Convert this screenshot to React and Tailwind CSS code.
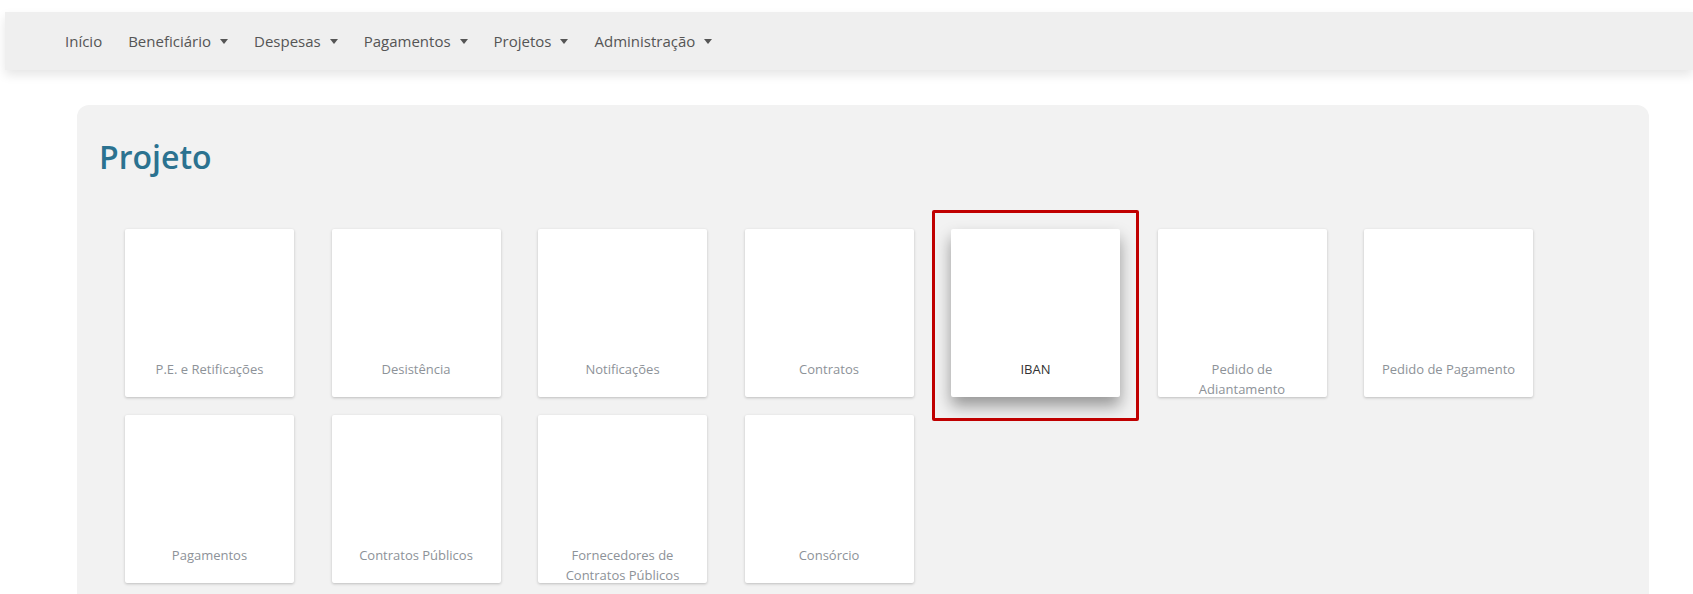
import { useState } from "react";

const menu = [
  { label: "Início" },
  { label: "Beneficiário", dropdown: true },
  { label: "Despesas", dropdown: true },
  { label: "Pagamentos", dropdown: true },
  { label: "Projetos", dropdown: true },
  { label: "Administração", dropdown: true },
];

const tiles = [
  { id: "pe", label: "P.E. e Retificações" },
  { id: "desistencia", label: "Desistência" },
  { id: "notificacoes", label: "Notificações" },
  { id: "contratos", label: "Contratos" },
  { id: "iban", label: "IBAN" },
  { id: "adiantamento", label: "Pedido de Adiantamento" },
  { id: "pedido-pagamento", label: "Pedido de Pagamento" },
  { id: "pagamentos", label: "Pagamentos" },
  { id: "contratos-publicos", label: "Contratos Públicos" },
  { id: "fornecedores", label: "Fornecedores de Contratos Públicos" },
  { id: "consorcio", label: "Consórcio" },
];

const Caret = () => (
  <svg width="8" height="5" viewBox="0 0 8 5" className="ml-[9px] mt-[1px]">
    <path d="M0 0h8L4 5z" fill="#555" />
  </svg>
);

const Tile = ({ tile, active }) => (
  <div className="relative">
    <button
      className={
        active
          ? "w-[169px] h-[168px] bg-white rounded-[2px] shadow-[0_9px_16px_rgba(0,0,0,0.38)] flex flex-col items-center pt-[130px] px-[14px]"
          : "w-[169px] h-[168px] bg-white rounded-[2px] shadow-[0_1px_3px_rgba(0,0,0,0.22)] flex flex-col items-center pt-[130px] px-[14px]"
      }
    >
      <span
        className={
          active
            ? "text-[13px] leading-[20px] text-[#333] text-center"
            : "text-[13px] leading-[20px] text-[#8d9298] text-center"
        }
      >
        {tile.label}
      </span>
    </button>
    {/* destaque do item selecionado */}
    {active && (
      <div className="absolute -left-[19px] -right-[19px] -top-[19px] -bottom-[24px] border-[3px] border-[#c00000] rounded-[2px] pointer-events-none" />
    )}
  </div>
);

export default function App() {
  const [selected, setSelected] = useState("iban");

  return (
    <div className="min-h-screen bg-white font-['Open_Sans',sans-serif]">
      {/* Navbar */}
      <nav className="mt-3 ml-[5px] h-[58px] bg-[#efefef] shadow-[0_5px_10px_rgba(0,0,0,0.10)] flex items-center pl-[60px] gap-[26px]">
        {menu.map((m) => (
          <a
            key={m.label}
            href="#"
            className="flex items-center text-[15px] text-[#555] hover:text-black"
          >
            {m.label}
            {m.dropdown && <Caret />}
          </a>
        ))}
      </nav>

      {/* Painel do projeto */}
      <div className="mt-[35px] ml-[77px] mr-[44px] bg-[#f2f2f2] rounded-xl pt-8 pl-[22px] pb-10">
        <h1 className="text-[32px] leading-[40px] font-semibold text-[#2b7290]">
          Projeto
        </h1>

        <div className="mt-[52px] ml-[26px] grid grid-cols-[repeat(7,169px)] gap-x-[37.5px] gap-y-[18px]">
          {tiles.map((t) => (
            <div key={t.id} onClick={() => setSelected(t.id)}>
              <Tile tile={t} active={selected === t.id} />
            </div>
          ))}
        </div>
      </div>
    </div>
  );
}
